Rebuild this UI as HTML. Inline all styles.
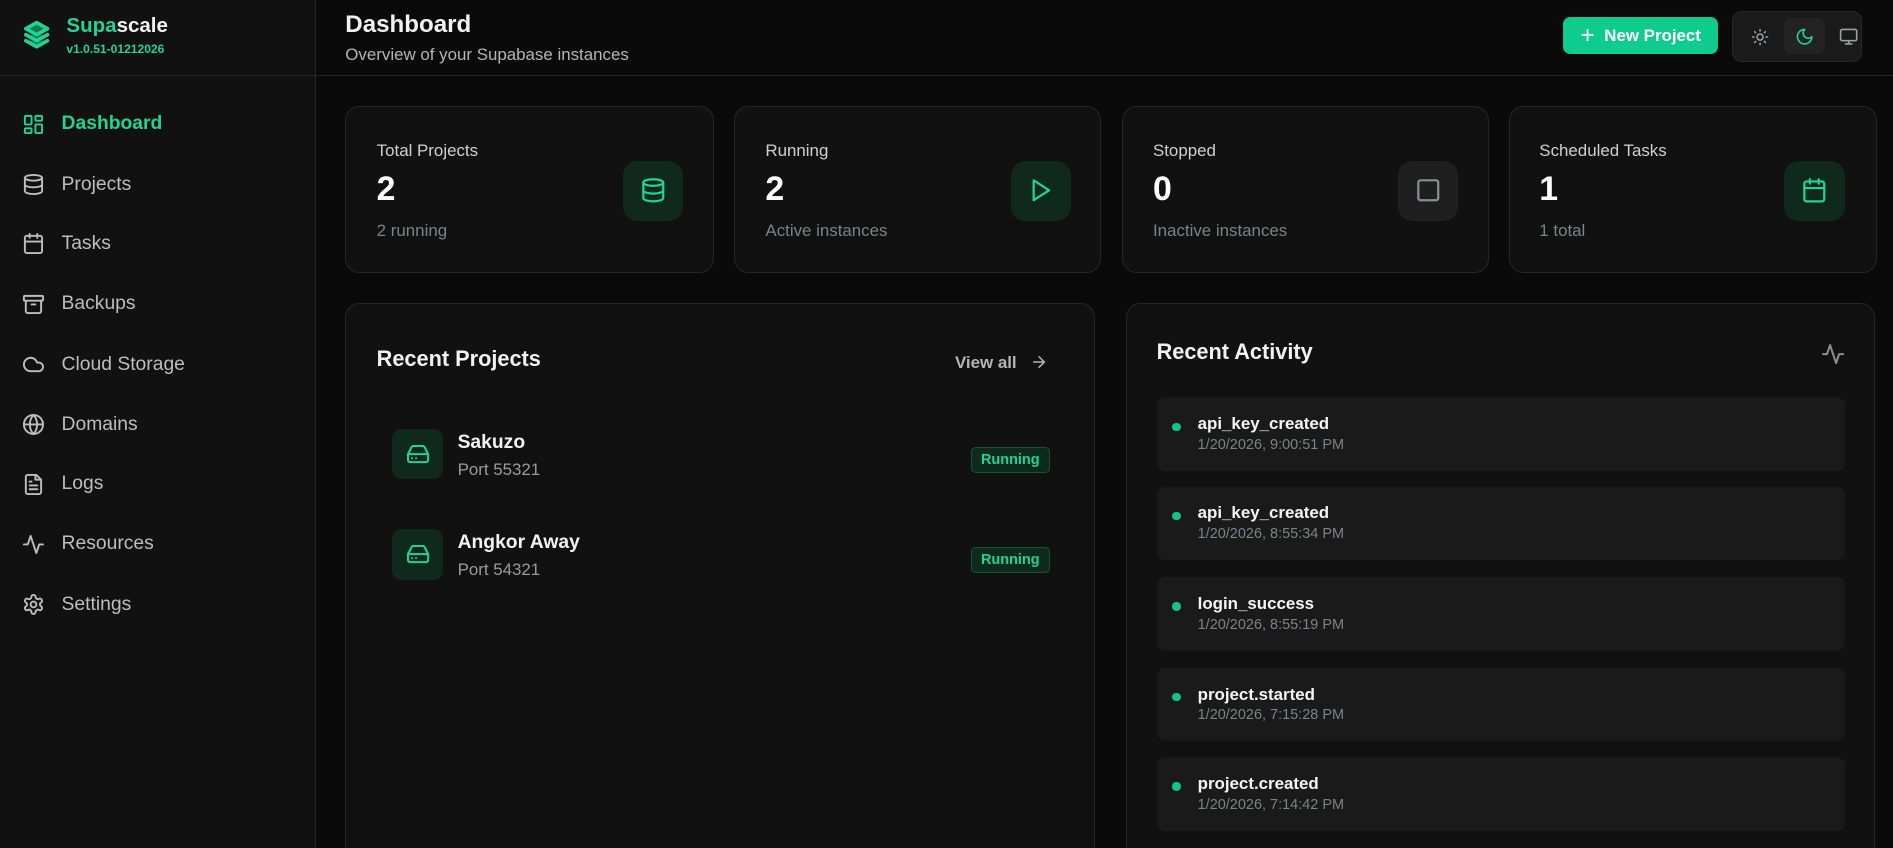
<!DOCTYPE html>
<html><head><meta charset="utf-8"><style>
html,body{margin:0;padding:0;background:#0a0a0a;overflow:hidden}
body{width:1568px;height:702px;zoom:1.2073;position:relative;font-family:"Liberation Sans",sans-serif;color:#f2f2f2}
.a{position:absolute}
svg{fill:none;stroke-linecap:round;stroke-linejoin:round}
.side{left:0;top:0;width:261px;height:702px;background:#111;border-right:1px solid #262626}
.nav{left:18px;display:flex;align-items:center;font-size:16px;color:#bdbdbd;height:24px}
.nav svg{width:19px;height:19px;stroke:#bdbdbd;stroke-width:2;margin-right:14px}
.card{background:#111;border:1px solid #262626;border-radius:12px;box-sizing:border-box}
.lbl{font-size:14px;color:#d0d0d0}
.num{font-size:28px;font-weight:bold;color:#fff}
.sub{font-size:14px;color:#7c818a}
.ib{width:50px;height:50px;border-radius:12px;background:#10291f;display:flex;align-items:center;justify-content:center}
.ib svg{width:22px;height:22px;stroke:#1fd494;stroke-width:2}
.act{left:958px;width:570px;height:61px;background:#1a1a1a;border-radius:7px}
.act .d{position:absolute;left:13px;top:21px;width:7px;height:7px;border-radius:50%;background:#12c48a}
.act .t{position:absolute;left:34px;top:14px;font-size:14px;font-weight:bold;color:#f5f5f5}
.act .s{position:absolute;left:34px;top:33px;font-size:12px;color:#7c818a}
.pi{width:42px;height:42px;border-radius:8px;background:#10291f;display:flex;align-items:center;justify-content:center}
.pi svg{width:20px;height:20px;stroke:#1fd494;stroke-width:2}
.badge{left:804px;width:64px;height:20px;border:1px solid #14523a;background:#0e2a1f;border-radius:4px;color:#1fd494;font-size:12px;font-weight:bold;text-align:center;line-height:20px}
</style></head><body>
<div class="a side"></div>
<div class="a" style="left:0;top:62px;width:1568px;height:1px;background:#262626"></div>
<svg class="a" style="left:17px;top:16px" width="26" height="28" viewBox="0 0 26 28"><path d="M4 8l9-5 9 5-9 5z M4 13l9 5 9-5 M4 18l9 5 9-5" stroke="#1fd494" stroke-width="3" fill="#0f7a55"/></svg>
<div class="a" style="left:55px;top:12px;font-size:17px;font-weight:bold"><span style="color:#1fd494">Supa</span>scale</div>
<div class="a" style="left:55px;top:35px;font-size:10px;font-weight:bold;color:#1fd494">v1.0.51-01212026</div>

<div class="a nav" style="top:91px;color:#1fd494;font-weight:bold"><svg viewBox="0 0 24 24" style="stroke:#1fd494"><rect x="3" y="3" width="7" height="9" rx="1"/><rect x="14" y="3" width="7" height="5" rx="1"/><rect x="14" y="12" width="7" height="9" rx="1"/><rect x="3" y="16" width="7" height="5" rx="1"/></svg>Dashboard</div>
<div class="a nav" style="top:141px"><svg viewBox="0 0 24 24"><ellipse cx="12" cy="5" rx="9" ry="3"/><path d="M3 5v14a9 3 0 0 0 18 0V5M3 12a9 3 0 0 0 18 0"/></svg>Projects</div>
<div class="a nav" style="top:190px"><svg viewBox="0 0 24 24"><rect x="3" y="4" width="18" height="18" rx="2"/><path d="M16 2v4M8 2v4M3 10h18"/></svg>Tasks</div>
<div class="a nav" style="top:240px"><svg viewBox="0 0 24 24"><rect x="2" y="3" width="20" height="5" rx="1"/><path d="M4 8v11a2 2 0 0 0 2 2h12a2 2 0 0 0 2-2V8M10 12h4"/></svg>Backups</div>
<div class="a nav" style="top:290px"><svg viewBox="0 0 24 24"><path d="M17.5 19H9a7 7 0 1 1 6.7-9h1.8a4.5 4.5 0 1 1 0 9z"/></svg>Cloud Storage</div>
<div class="a nav" style="top:340px"><svg viewBox="0 0 24 24"><circle cx="12" cy="12" r="10"/><path d="M2 12h20M12 2a15 15 0 0 1 0 20a15 15 0 0 1 0-20"/></svg>Domains</div>
<div class="a nav" style="top:389px"><svg viewBox="0 0 24 24"><path d="M15 2H6a2 2 0 0 0-2 2v16a2 2 0 0 0 2 2h12a2 2 0 0 0 2-2V7z"/><path d="M14 2v5h5M16 13H8M16 17H8M10 9H8"/></svg>Logs</div>
<div class="a nav" style="top:439px"><svg viewBox="0 0 24 24"><path d="M22 12h-4l-3 9L9 3l-3 9H2"/></svg>Resources</div>
<div class="a nav" style="top:489px"><svg viewBox="0 0 24 24"><circle cx="12" cy="12" r="3"/><path d="M12.2 2h-.4a2 2 0 0 0-2 2v.2a2 2 0 0 1-1 1.7l-.4.3a2 2 0 0 1-2 0l-.2-.1a2 2 0 0 0-2.7.7l-.2.4a2 2 0 0 0 .7 2.7l.2.1a2 2 0 0 1 1 1.7v.5a2 2 0 0 1-1 1.7l-.2.1a2 2 0 0 0-.7 2.7l.2.4a2 2 0 0 0 2.7.7l.2-.1a2 2 0 0 1 2 0l.4.3a2 2 0 0 1 1 1.7v.2a2 2 0 0 0 2 2h.4a2 2 0 0 0 2-2v-.2a2 2 0 0 1 1-1.7l.4-.3a2 2 0 0 1 2 0l.2.1a2 2 0 0 0 2.7-.7l.2-.4a2 2 0 0 0-.7-2.7l-.2-.1a2 2 0 0 1-1-1.7v-.5a2 2 0 0 1 1-1.7l.2-.1a2 2 0 0 0 .7-2.7l-.2-.4a2 2 0 0 0-2.7-.7l-.2.1a2 2 0 0 1-2 0l-.4-.3a2 2 0 0 1-1-1.7V4a2 2 0 0 0-2-2z"/></svg>Settings</div>

<div class="a" style="left:286px;top:9px;font-size:20px;font-weight:bold">Dashboard</div>
<div class="a" style="left:286px;top:37px;font-size:14px;color:#b5b5b5">Overview of your Supabase instances</div>
<div class="a" style="left:1295px;top:14px;width:128px;height:31px;background:#0fcb8e;border-radius:6px;color:#fff;font-weight:bold;font-size:14px;display:flex;align-items:center;justify-content:center"><span style="font-size:20px;font-weight:normal;margin-right:8px;line-height:1">+</span>New Project</div>
<div class="a" style="left:1435px;top:9px;width:107px;height:42px;background:#1a1a1a;border:1px solid #2a2a2a;border-radius:8px;box-sizing:border-box"></div>
<div class="a" style="left:1478px;top:15px;width:34px;height:30px;background:#232323;border-radius:6px"></div>
<svg class="a" style="left:1450px;top:23px" width="15" height="15" viewBox="0 0 24 24" stroke="#9aa0a6" stroke-width="2"><circle cx="12" cy="12" r="4"/><path d="M12 2v2M12 20v2M4.9 4.9l1.4 1.4M17.7 17.7l1.4 1.4M2 12h2M20 12h2M6.3 17.7l-1.4 1.4M19.1 4.9l-1.4 1.4"/></svg>
<svg class="a" style="left:1487px;top:22px" width="16" height="16" viewBox="0 0 24 24" stroke="#1fd494" stroke-width="2"><path d="M12 3a6 6 0 0 0 9 9 9 9 0 1 1-9-9z"/></svg>
<svg class="a" style="left:1523px;top:22px" width="16" height="16" viewBox="0 0 24 24" stroke="#9aa0a6" stroke-width="2"><rect x="2" y="3" width="20" height="14" rx="2"/><path d="M8 21h8M12 17v4"/></svg>

<div class="a card" style="left:286px;top:88px;width:305px;height:138px"></div>
<div class="a card" style="left:608px;top:88px;width:304px;height:138px"></div>
<div class="a card" style="left:929px;top:88px;width:304px;height:138px"></div>
<div class="a card" style="left:1250px;top:88px;width:305px;height:138px"></div>
<div class="a lbl" style="left:312px;top:117px">Total Projects</div><div class="a num" style="left:312px;top:141px">2</div><div class="a sub" style="left:312px;top:183px">2 running</div>
<div class="a lbl" style="left:634px;top:117px">Running</div><div class="a num" style="left:634px;top:141px">2</div><div class="a sub" style="left:634px;top:183px">Active instances</div>
<div class="a lbl" style="left:955px;top:117px">Stopped</div><div class="a num" style="left:955px;top:141px">0</div><div class="a sub" style="left:955px;top:183px">Inactive instances</div>
<div class="a lbl" style="left:1275px;top:117px">Scheduled Tasks</div><div class="a num" style="left:1275px;top:141px">1</div><div class="a sub" style="left:1275px;top:183px">1 total</div>
<div class="a ib" style="left:516px;top:133px"><svg viewBox="0 0 24 24"><ellipse cx="12" cy="5" rx="9" ry="3"/><path d="M3 5v14a9 3 0 0 0 18 0V5M3 12a9 3 0 0 0 18 0"/></svg></div>
<div class="a ib" style="left:837px;top:133px"><svg viewBox="0 0 24 24"><path d="M6 3l14 9-14 9z"/></svg></div>
<div class="a ib" style="left:1158px;top:133px;background:#1f1f1f"><svg viewBox="0 0 24 24" style="stroke:#8a8f96"><rect x="3" y="3" width="18" height="18" rx="2"/></svg></div>
<div class="a ib" style="left:1478px;top:133px"><svg viewBox="0 0 24 24"><rect x="3" y="4" width="18" height="18" rx="2"/><path d="M16 2v4M8 2v4M3 10h18"/></svg></div>

<div class="a card" style="left:286px;top:251px;width:621px;height:480px"></div>
<div class="a" style="left:312px;top:287px;font-size:18px;font-weight:bold">Recent Projects</div>
<div class="a" style="left:791px;top:292px;font-size:14px;font-weight:bold;color:#b5b5b5">View all</div>
<svg class="a" style="left:853px;top:292px" width="15" height="15" viewBox="0 0 24 24" stroke="#b5b5b5" stroke-width="2"><path d="M5 12h14M12 5l7 7-7 7"/></svg>
<div class="a pi" style="left:325px;top:355px"><svg viewBox="0 0 24 24"><path d="M22 12H2M5.5 5.1L2 12v6a2 2 0 0 0 2 2h16a2 2 0 0 0 2-2v-6l-3.5-6.9A2 2 0 0 0 16.8 4H7.2a2 2 0 0 0-1.7 1.1zM6 16h.01M10 16h.01"/></svg></div>
<div class="a" style="left:379px;top:358px;font-size:16px;font-weight:bold">Sakuzo</div>
<div class="a" style="left:379px;top:381px;font-size:14px;color:#9a9a9a">Port 55321</div>
<div class="a badge" style="top:370px">Running</div>
<div class="a pi" style="left:325px;top:438px"><svg viewBox="0 0 24 24"><path d="M22 12H2M5.5 5.1L2 12v6a2 2 0 0 0 2 2h16a2 2 0 0 0 2-2v-6l-3.5-6.9A2 2 0 0 0 16.8 4H7.2a2 2 0 0 0-1.7 1.1zM6 16h.01M10 16h.01"/></svg></div>
<div class="a" style="left:379px;top:441px;font-size:16px;font-weight:bold">Angkor Away</div>
<div class="a" style="left:379px;top:464px;font-size:14px;color:#9a9a9a">Port 54321</div>
<div class="a badge" style="top:453px">Running</div>

<div class="a card" style="left:933px;top:251px;width:620px;height:480px"></div>
<div class="a" style="left:958px;top:281px;font-size:18px;font-weight:bold">Recent Activity</div>
<svg class="a" style="left:1508px;top:283px" width="20" height="20" viewBox="0 0 24 24" stroke="#8a8f96" stroke-width="2"><path d="M22 12h-4l-3 9L9 3l-3 9H2"/></svg>
<div class="a act" style="top:329px"><div class="d"></div><div class="t">api_key_created</div><div class="s">1/20/2026, 9:00:51 PM</div></div>
<div class="a act" style="top:403px"><div class="d"></div><div class="t">api_key_created</div><div class="s">1/20/2026, 8:55:34 PM</div></div>
<div class="a act" style="top:478px"><div class="d"></div><div class="t">login_success</div><div class="s">1/20/2026, 8:55:19 PM</div></div>
<div class="a act" style="top:553px"><div class="d"></div><div class="t">project.started</div><div class="s">1/20/2026, 7:15:28 PM</div></div>
<div class="a act" style="top:627px"><div class="d"></div><div class="t">project.created</div><div class="s">1/20/2026, 7:14:42 PM</div></div>
</body></html>
